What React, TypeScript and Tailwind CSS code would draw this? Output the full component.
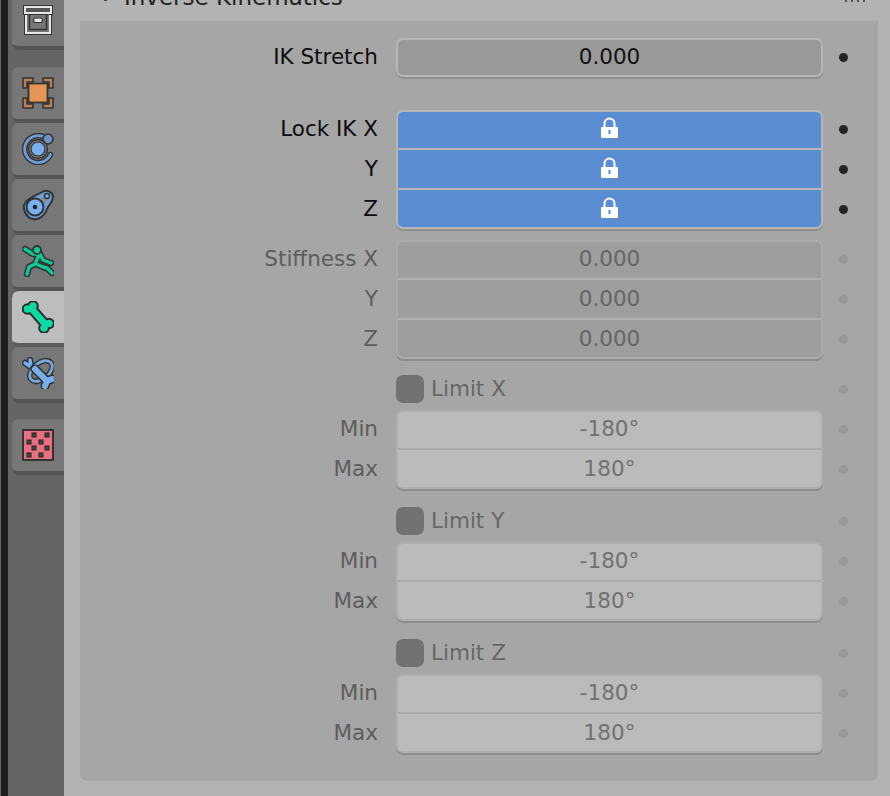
import type { ReactNode } from 'react';

const FONT = "font-['DejaVu_Sans',sans-serif]";

function Tab({ active, children, gapTop }: { active?: boolean; children: ReactNode; gapTop?: string }) {
    return (
        <div
            className={`flex h-[56px] w-[52px] shrink-0 items-center justify-start rounded-l-[7px] border-b-[4px] pl-[10px] ${gapTop ?? ''} ${
                active ? 'border-[#5a5a5a] bg-[#bdbdbd]' : 'border-[#555555] bg-[#777777]'
            }`}
        >
            {children}
        </div>
    );
}

function ArchiveIcon() {
    return (
        <svg width="32" height="32" viewBox="0 0 32 32">
            <path d="M1 1h30v10h-1v20H2V11H1z" fill="#333" />
            <rect x="3" y="3" width="26" height="6" fill="#555" stroke="#e8e8e8" strokeWidth="2" />
            <rect x="4" y="11" width="24" height="18" fill="#777" />
            <path d="M4 11v18h24V11" fill="none" stroke="#e8e8e8" strokeWidth="2" />
            <path d="M7.500 11v14.500h17V11" fill="none" stroke="#333" strokeWidth="1.600" />
            <rect x="11.500" y="14" width="9" height="4.500" rx="2" fill="#e8e8e8" stroke="#333" strokeWidth="1.200" />
        </svg>
    );
}

function ObjectIcon() {
    return (
        <svg width="32" height="32" viewBox="0 0 32 32">
            <path d="M1 11V1h10v4H5v6zM21 1h10v10h-4V5h-6zM1 21h4v6h6v4H1zM31 21v10H21v-4h6v-6z" fill="#b97f58" stroke="#333" strokeWidth="1.600" strokeLinejoin="round" />
            <rect x="6.500" y="6.500" width="19" height="19" fill="#e59556" stroke="#333" strokeWidth="1.800" />
        </svg>
    );
}

function PhysicsIcon() {
    return (
        <svg width="32" height="32" viewBox="0 0 32 32">
            <path d="M21 3.500A13.500 13.500 0 1 0 28.500 21.500" fill="none" stroke="#333" strokeWidth="5.500" strokeLinecap="round" />
            <path d="M21 3.500A13.500 13.500 0 1 0 28.500 21.500" fill="none" stroke="#6d9ed6" strokeWidth="2.800" strokeLinecap="round" />
            <circle cx="26" cy="6" r="5" fill="#6d94c6" stroke="#333" strokeWidth="1.600" />
            <circle cx="16" cy="16" r="9.500" fill="none" stroke="#333" strokeWidth="1.400" />
            <circle cx="16" cy="16" r="7" fill="#78b0ee" stroke="#333" strokeWidth="1.200" />
        </svg>
    );
}

function ConstraintIcon() {
    return (
        <svg width="32" height="32" viewBox="0 0 32 32">
            <path d="M2 16C4 10 13 7 21 2.500C25 .5 31 3 31 8C31 13 27 15 25 20C22 28 16 31 11 30C5 29 1 22 2 16z" fill="#6d9ed6" stroke="#333" strokeWidth="2" strokeLinejoin="round" />
            <path d="M19 14l5-5" stroke="#8a8a8a" strokeWidth="5" />
            <circle cx="13" cy="18" r="8.500" fill="#78b0ee" stroke="#333" strokeWidth="2" />
            <circle cx="13" cy="18" r="2.300" fill="#222" />
            <circle cx="25" cy="7" r="2.500" fill="#78b0ee" stroke="#333" strokeWidth="1.400" />
        </svg>
    );
}

function ArmatureIcon() {
    const d = 'M3 4l8 5h7l3 6 8 3M17 10l-4 9-6 3-2 7M14 19l7 3 4 1 5 5';
    return (
        <svg width="32" height="32" viewBox="0 0 32 32">
            <g fill="none" strokeLinecap="round" strokeLinejoin="round">
                <path d={d} stroke="#333" strokeWidth="6.500" />
                <path d={d} stroke="#11c796" strokeWidth="3.400" />
            </g>
            <circle cx="15" cy="5" r="4" fill="#11c796" stroke="#333" strokeWidth="1.800" />
        </svg>
    );
}

function BoneIcon() {
    return (
        <svg width="32" height="32" viewBox="0 0 32 32">
            <g fill="#2b2b2b" stroke="#2b2b2b" strokeWidth="4">
                <circle cx="5.500" cy="8" r="3.800" />
                <circle cx="11" cy="5" r="3.800" />
                <circle cx="27" cy="22.500" r="3.800" />
                <circle cx="22" cy="27" r="3.800" />
                <path d="M9 7l15 17" strokeWidth="10.500" />
            </g>
            <g fill="#0fd9a3" stroke="#0fd9a3">
                <circle cx="5.500" cy="8" r="3.800" strokeWidth="0" />
                <circle cx="11" cy="5" r="3.800" strokeWidth="0" />
                <circle cx="27" cy="22.500" r="3.800" strokeWidth="0" />
                <circle cx="22" cy="27" r="3.800" strokeWidth="0" />
                <path d="M9 7l15 17" strokeWidth="6.500" />
            </g>
        </svg>
    );
}

function BoneConstraintIcon() {
    const bone = 'M13 12l12 12M25 24l5-2M25 24l-2 5';
    const stub = 'M3 6l6 4M8 3l1 7M9 10l3 3';
    return (
        <svg width="32" height="32" viewBox="0 0 32 32">
            <g fill="none" strokeLinecap="round" strokeLinejoin="round">
                <path d={stub} stroke="#333" strokeWidth="6.500" />
                <path d={stub} stroke="#78b0ee" strokeWidth="3.500" />
                <ellipse cx="19" cy="14" rx="13" ry="8" transform="rotate(-40 19 14)" stroke="#333" strokeWidth="5.500" />
                <ellipse cx="19" cy="14" rx="13" ry="8" transform="rotate(-40 19 14)" stroke="#78a8e0" strokeWidth="2.800" />
                <path d={bone} stroke="#333" strokeWidth="9" />
                <path d={bone} stroke="#78b0ee" strokeWidth="6" />
            </g>
        </svg>
    );
}

function TextureIcon() {
    const squares = [
        [12, 6], [25, 6],
        [7, 13], [19, 13],
        [12, 19], [25, 19],
        [7, 26], [19, 26],
    ];
    return (
        <svg width="32" height="32" viewBox="0 0 32 32">
            <rect x="1" y="1" width="30" height="30" fill="#ea6f80" stroke="#333" strokeWidth="2" />
            {squares.map(([x, y]) => (
                <rect key={`${x}-${y}`} x={x - 1.500} y={y - 1.500} width="3" height="3" fill="#999999" stroke="#333" strokeWidth="2.200" />
            ))}
        </svg>
    );
}

function LockIcon() {
    return (
        <svg width="19" height="22" viewBox="0 0 19 22">
            <path d="M4.500 10V6.500a5 5 0 0 1 10 0V10" fill="none" stroke="#fff" strokeWidth="2" />
            <path d="M2 10h15a1 1 0 0 1 1 1v9a1 1 0 0 1-1 1H2a1 1 0 0 1-1-1v-9a1 1 0 0 1 1-1z" fill="#fff" />
            <rect x="8.500" y="13" width="2" height="4" fill="#5a8dd2" />
        </svg>
    );
}

function Dot({ dim }: { dim?: boolean }) {
    return (
        <div className="flex w-[40px] shrink-0 justify-center">
            <div className={`size-[9px] rounded-full ${dim ? 'bg-[#989898]' : 'bg-[#242424]'}`} />
        </div>
    );
}

function Label({ text, dim }: { text: string; dim?: boolean }) {
    return <div className={`w-[316px] shrink-0 pr-[18px] text-right ${dim ? 'text-[#5d5d5d]' : 'text-[#0d0d0d]'}`}>{text}</div>;
}

type Tone = 'dark' | 'blue' | 'disabledDark' | 'disabledLight';

const toneCell: Record<Tone, string> = {
    dark: 'bg-[#999999] text-[#111111]',
    blue: 'bg-[#5a8dd2] text-white',
    disabledDark: 'bg-[#9e9e9e] text-[#666666]',
    disabledLight: 'bg-[#bbbbbb] text-[#717171]',
};

const toneGroup: Record<Tone, string> = {
    dark: 'border-[#b6b6b6] bg-[#b6b6b6] shadow-[0_2px_0_#8f8f8f]',
    blue: 'border-[#b6b6b6] bg-[#b6b6b6] shadow-[0_2px_0_#8f8f8f]',
    disabledDark: 'border-[#ababab] bg-[#b0b0b0] shadow-[0_2px_0_#8d8d8d]',
    disabledLight: 'border-[#afafaf] bg-[#aaaaaa] shadow-[0_2px_0_#8d8d8d]',
};

// stack of connected fields, one row per label
function FieldGroup({ rows, tone, dim }: { rows: { label: string; value?: string }[]; tone: Tone; dim?: boolean }) {
    return (
        <div className="flex">
            <div className="-mt-[1px] flex flex-col">
                {rows.map((r) => (
                    <div key={r.label} className="flex h-[40px] items-center">
                        <Label text={r.label} dim={dim} />
                    </div>
                ))}
            </div>
            <div className={`flex w-[427px] shrink-0 flex-col gap-[2px] rounded-[7px] border-2 ${rows.length === 2 ? 'h-[79px]' : 'h-[119px]'} ${toneGroup[tone]}`}>
                {rows.map((r) => (
                    <div
                        key={r.label}
                        className={`flex h-[38px] justify-center pt-[2px] first:h-[36px] first:rounded-t-[5px] first:pt-0 last:min-h-0 last:flex-1 last:rounded-b-[5px] ${toneCell[tone]}`}
                    >
                        {r.value ? (
                            <div className="flex h-[34px] items-center">{r.value}</div>
                        ) : (
                            <div className="flex h-[32px] items-center"><LockIcon /></div>
                        )}
                    </div>
                ))}
            </div>
            <div className="-mt-[1px] flex flex-col">
                {rows.map((r) => (
                    <div key={r.label} className="flex h-[40px] items-center">
                        <Dot dim={dim} />
                    </div>
                ))}
            </div>
        </div>
    );
}

function LimitBlock({ axis }: { axis: string }) {
    return (
        <div className="flex flex-col">
            <div className="flex h-[28px] items-center">
                <div className="w-[316px] shrink-0" />
                <div className="flex w-[427px] shrink-0 items-center gap-[7px]">
                    <div className="size-[28px] rounded-[7px] bg-[#727272]" />
                    <span className="text-[#666666]">Limit {axis}</span>
                </div>
                <Dot dim />
            </div>
            <div className="mt-[7px]">
                <FieldGroup
                    dim
                    tone="disabledLight"
                    rows={[
                        { label: 'Min', value: '-180°' },
                        { label: 'Max', value: '180°' },
                    ]}
                />
            </div>
        </div>
    );
}

export default function App() {
    return (
        <div className={`flex h-[796px] w-[890px] overflow-hidden bg-[#b3b3b3] text-[21.5px] ${FONT}`}>
            <div className="flex w-[64px] shrink-0 bg-[#656565]">
                <div className="ml-px h-full w-[7px] bg-[#1d1d1d]" />
                <div className="-mt-[6px] ml-[4px] flex flex-col">
                    <Tab><ArchiveIcon /></Tab>
                    <Tab gapTop="mt-[17px]"><ObjectIcon /></Tab>
                    <Tab><PhysicsIcon /></Tab>
                    <Tab><ConstraintIcon /></Tab>
                    <Tab><ArmatureIcon /></Tab>
                    <Tab active><BoneIcon /></Tab>
                    <Tab><BoneConstraintIcon /></Tab>
                    <Tab gapTop="mt-[16px]"><TextureIcon /></Tab>
                </div>
            </div>

            <div className="flex min-w-0 flex-1 flex-col pl-[16px] pr-[12px]">
                {/* panel header, scrolled almost out of view */}
                <div className="-mt-[8px] flex h-[29px] shrink-0 items-start pl-[24px] pr-[13px] text-[23px] text-[#222222]">
                    <div className="mt-[8px] h-px w-[3px] bg-[#444444]" />
                    <div className="-mt-[12px] ml-[17px]">Inverse Kinematics</div>
                    <div className="ml-auto mt-[8px] flex gap-[4px]">
                        <div className="size-[2px] bg-[#555555]" />
                        <div className="size-[2px] bg-[#555555]" />
                        <div className="size-[2px] bg-[#555555]" />
                        <div className="size-[2px] bg-[#555555]" />
                    </div>
                </div>
                <div className="h-[760px] rounded-b-[7px] bg-[#a6a6a6] pt-[17px]">
                    <div className="flex h-[39px] items-center">
                        <Label text="IK Stretch" />
                        <div className={`flex h-[39px] w-[427px] shrink-0 rounded-[7px] border-2 ${toneGroup.dark}`}>
                            <div className={`flex flex-1 items-center justify-center rounded-[5px] ${toneCell.dark}`}>0.000</div>
                        </div>
                        <Dot />
                    </div>

                    <div className="mt-[33px]">
                        <FieldGroup
                            tone="blue"
                            rows={[{ label: 'Lock IK X' }, { label: 'Y' }, { label: 'Z' }]}
                        />
                    </div>

                    <div className="mt-[11px]">
                        <FieldGroup
                            dim
                            tone="disabledDark"
                            rows={[
                                { label: 'Stiffness X', value: '0.000' },
                                { label: 'Y', value: '0.000' },
                                { label: 'Z', value: '0.000' },
                            ]}
                        />
                    </div>

                    <div className="mt-[16px] flex flex-col gap-[18px]">
                        <LimitBlock axis="X" />
                        <LimitBlock axis="Y" />
                        <LimitBlock axis="Z" />
                    </div>
                </div>
            </div>
        </div>
    );
}
